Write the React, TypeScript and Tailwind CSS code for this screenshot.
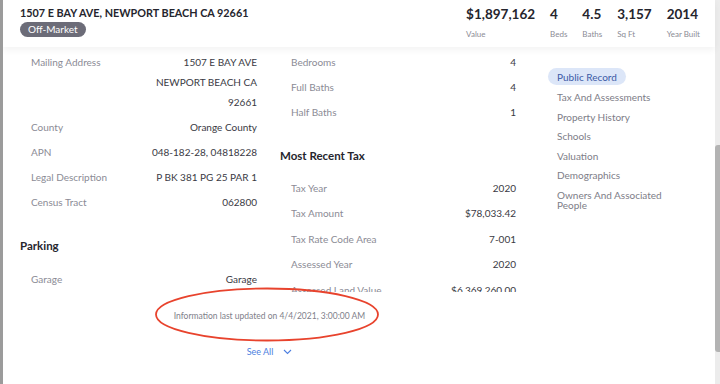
import React from "react";

type Row = { label: string; value: React.ReactNode };

const recordRows: Row[] = [
  {
    label: "Mailing Address",
    value: (
      <>
        1507 E BAY AVE
        <br />
        NEWPORT BEACH CA
        <br />
        92661
      </>
    ),
  },
  { label: "County", value: "Orange County" },
  { label: "APN", value: "048-182-28, 04818228" },
  { label: "Legal Description", value: "P BK 381 PG 25 PAR 1" },
  { label: "Census Tract", value: "062800" },
];

const roomRows: Row[] = [
  { label: "Bedrooms", value: "4" },
  { label: "Full Baths", value: "4" },
  { label: "Half Baths", value: "1" },
];

const taxRows: Row[] = [
  { label: "Tax Year", value: "2020" },
  { label: "Tax Amount", value: "$78,033.42" },
  { label: "Tax Rate Code Area", value: "7-001" },
  { label: "Assessed Year", value: "2020" },
  { label: "Assessed Land Value", value: "$6,369,260.00" },
];

const stats = [
  { value: "$1,897,162", label: "Value" },
  { value: "4", label: "Beds" },
  { value: "4.5", label: "Baths" },
  { value: "3,157", label: "Sq Ft" },
  { value: "2014", label: "Year Built" },
];

const nav = [
  "Tax And Assessments",
  "Property History",
  "Schools",
  "Valuation",
  "Demographics",
  "Owners And Associated People",
];

function InfoRow({ row }: { row: Row }) {
  return (
    <div className="flex justify-between pl-[11px] py-[2.5px] text-[10px] leading-[20px]">
      <span className="text-[#8b8b95]">{row.label}</span>
      <span className="text-right text-[#3a3a44]">{row.value}</span>
    </div>
  );
}

function Heading({ children }: { children: React.ReactNode }) {
  return (
    <div className="text-[11.5px] font-bold text-[#26262e] leading-[20px]">{children}</div>
  );
}

export default function App() {
  return (
    <div
      className="w-[720px] h-[384px] flex bg-white overflow-hidden border-l-[3px] border-[#9b9b9b]"
      style={{ fontFamily: "Lato, 'Noto Sans', sans-serif" }}
    >
      <div className="relative flex-1 flex flex-col min-w-0">
        {/* Header */}
        <div className="relative z-10 h-[47px] shrink-0 flex justify-between pl-[17px] pr-[15px] bg-white shadow-[0_3px_7px_rgba(0,0,0,0.05)]">
          <div className="pt-[5px] flex flex-col items-start">
            <div className="text-[10.8px] font-bold text-[#25252d] leading-[16px]">
              1507 E BAY AVE, NEWPORT BEACH CA 92661
            </div>
            <span className="mt-[1px] flex h-[15px] items-center rounded-full bg-[#6c6c78] px-[8px] text-[10px] leading-[15px] text-white">
              Off-Market
            </span>
          </div>
          <div className="flex gap-[15px] pt-[5px]">
            {stats.map((s) => (
              <div key={s.label} className="flex flex-col">
                <span className="text-[13.5px] font-bold text-[#25252d] leading-[18px]">{s.value}</span>
                <span className="mt-[6px] text-[8px] text-[#8b8b95] leading-[10px]">{s.label}</span>
              </div>
            ))}
          </div>
        </div>

        {/* Body */}
        <div className="flex flex-1 min-h-0">
          <div className="w-[536px] shrink-0 flex flex-col">
            <div className="h-[245px] shrink-0 overflow-hidden">
              <div className="grid grid-cols-[237px_236px] gap-x-[23px] pl-[17px] pt-[2px]">
                <div>
                  {recordRows.map((r) => (
                    <InfoRow key={r.label} row={r} />
                  ))}
                  <div className="mt-[22px]">
                    <Heading>Parking</Heading>
                  </div>
                  <div className="mt-[10px]">
                    <InfoRow row={{ label: "Garage", value: "Garage" }} />
                  </div>
                </div>
                <div>
                  {roomRows.map((r) => (
                    <InfoRow key={r.label} row={r} />
                  ))}
                  <div className="mt-[22px]">
                    <Heading>Most Recent Tax</Heading>
                  </div>
                  <div className="mt-[9px]">
                    {taxRows.map((r) => (
                      <div key={r.label} className="h-[25.5px]">
                        <InfoRow row={r} />
                      </div>
                    ))}
                  </div>
                </div>
              </div>
            </div>
            <div className="pl-[17px] w-[516px] flex flex-col items-center">
              <div className="mt-[18px] text-[8.5px] text-[#80808a] leading-[12px]">
                Information last updated on 4/4/2021, 3:00:00 AM
              </div>
              <div className="mt-[24px] flex items-center gap-[10px] text-[9px] text-[#4d7fe0] leading-[12px]">
                <span>See All</span>
                <svg width="9" height="6" viewBox="0 0 9 6" fill="none">
                  <path d="M1 1l3.5 3.5L8 1" stroke="#4d7fe0" strokeWidth="1.1" />
                </svg>
              </div>
            </div>
          </div>

          {/* Side nav */}
          <div className="pl-[9px] pt-[21px] flex flex-col text-[10px] leading-[10px] text-[#7d7d87]">
            <span className="self-start rounded-full bg-[#dce6f8] px-[9px] py-[3.5px] text-[#3b5aa6]">
              Public Record
            </span>
            <div className="pl-[9px] w-[130px]">
              {nav.map((n, i) => (
                <div key={n} className={i === 0 ? "mt-[7px]" : "mt-[9.6px]"}>
                  {n}
                </div>
              ))}
            </div>
          </div>
        </div>

        {/* Annotation */}
        <svg className="absolute left-0 top-0 pointer-events-none" width="715" height="384">
          <ellipse cx="264" cy="314.5" rx="111" ry="26" fill="none" stroke="#e8432d" strokeWidth="1.8" />
        </svg>
      </div>

      {/* Scrollbar */}
      <div className="w-[5px] shrink-0 bg-[#ececec] flex flex-col">
        <div className="mt-[145px] h-[207px] rounded-l-[3px] bg-[#b3b3b3]" />
      </div>
    </div>
  );
}
